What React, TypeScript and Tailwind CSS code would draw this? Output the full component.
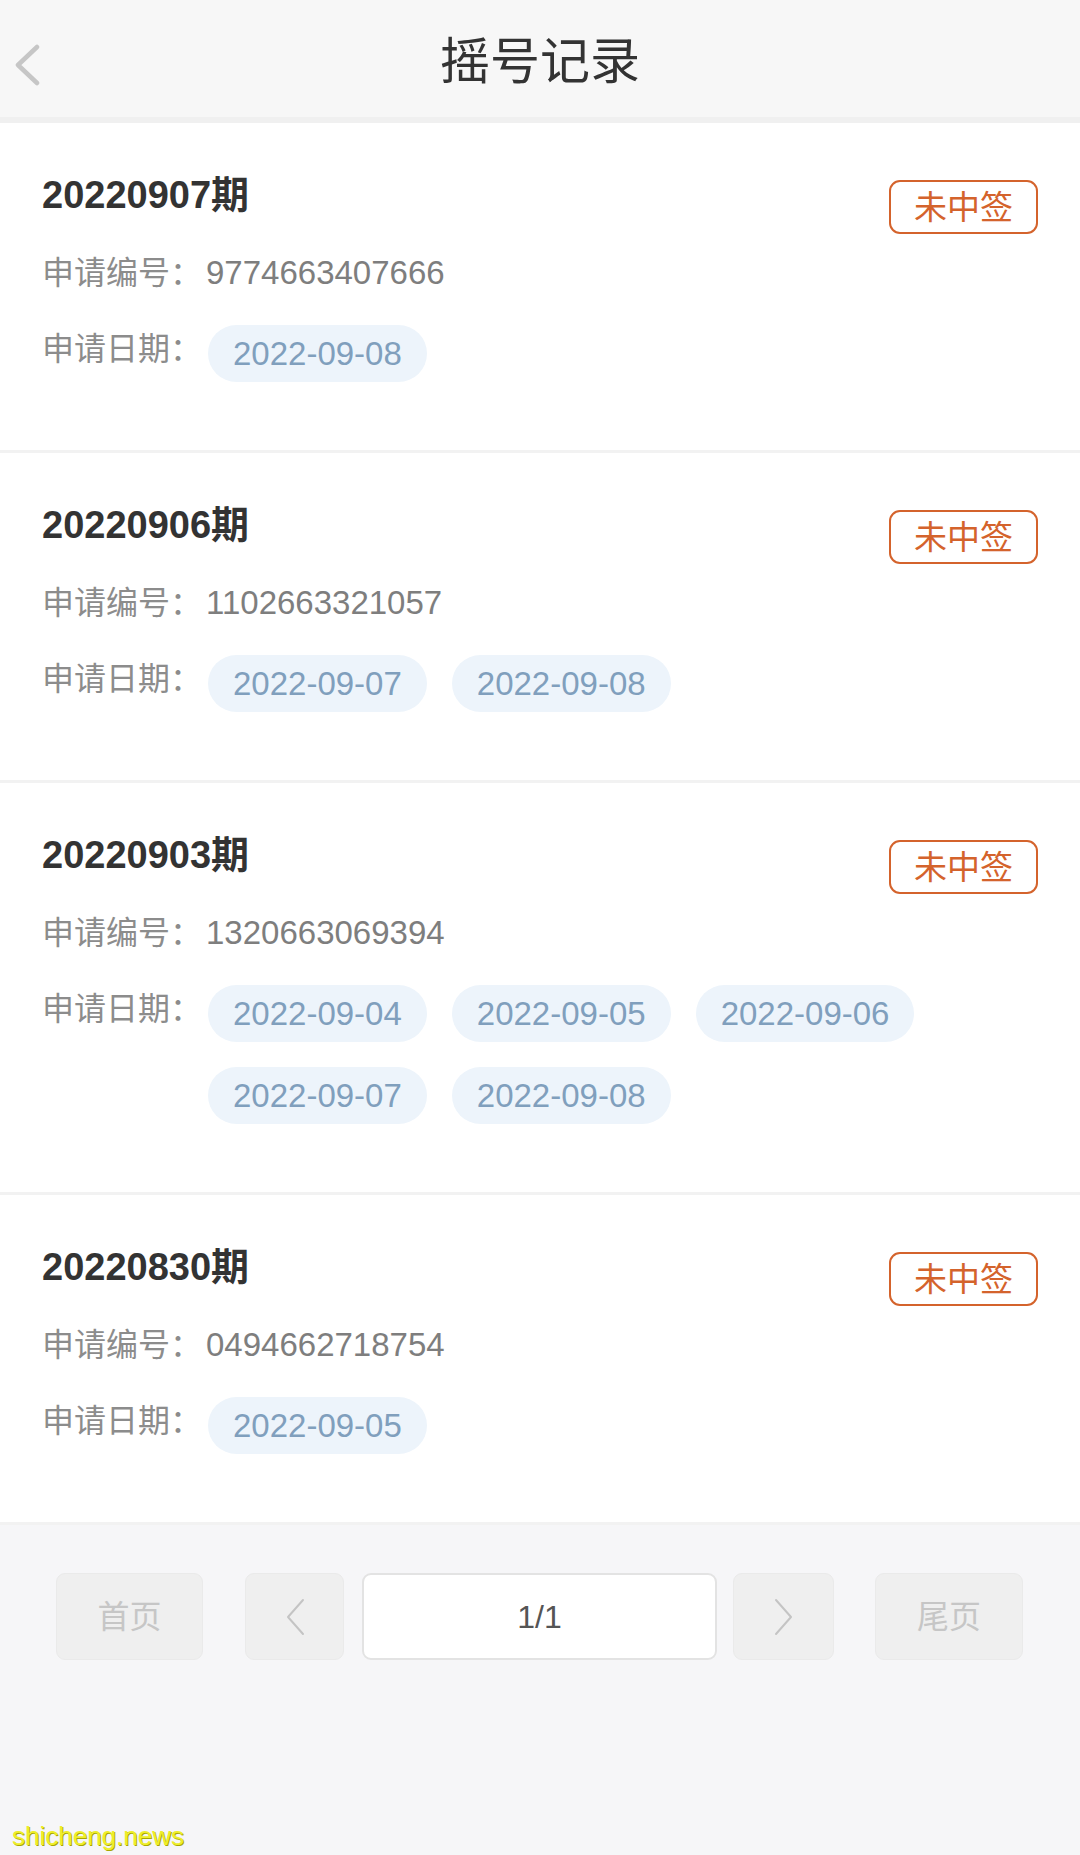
import React from "react";

type Rec = { period: string; code: string; dates: string[] };

const records: Rec[] = [
  { period: "20220907期", code: "9774663407666", dates: ["2022-09-08"] },
  { period: "20220906期", code: "1102663321057", dates: ["2022-09-07", "2022-09-08"] },
  {
    period: "20220903期",
    code: "1320663069394",
    dates: ["2022-09-04", "2022-09-05", "2022-09-06", "2022-09-07", "2022-09-08"],
  },
  { period: "20220830期", code: "0494662718754", dates: ["2022-09-05"] },
];

const FONT = "font-['Liberation_Sans','Noto_Sans_CJK_SC',sans-serif]";

function Card({ r }: { r: Rec }) {
  return (
    <div className="bg-white pl-[42px] pr-[42px] pt-[50px] pb-[68px] border-b-[3px] border-[#f2f2f2]">
      <div className="flex h-[44px] items-start justify-between">
        <div className="text-[38px] leading-[44px] font-bold text-[#333333]">{r.period}</div>
        <div className="mt-[7px] flex h-[54px] w-[149px] items-center justify-center rounded-[11px] border-[2.5px] border-[#d4632c] text-[33px] leading-none text-[#d4632c]">
          未中签
        </div>
      </div>
      <div className="mt-[34px] flex h-[44px] items-center">
        <span className="text-[32px] leading-[44px] text-[#8c8c8c]">申请编号：</span>
        <span className="ml-[4px] text-[33px] leading-[44px] text-[#7e7e7e]">{r.code}</span>
      </div>
      <div className="mt-[30px] flex items-start">
        <span className="mt-[2px] w-[166px] shrink-0 text-[32px] leading-[44px] text-[#8c8c8c]">申请日期：</span>
        <div className="flex flex-wrap gap-x-[25px] gap-y-[25px]">
          {r.dates.map((d) => (
            <div
              key={d}
              className="flex h-[57px] items-center rounded-full bg-[#edf4fb] px-[25px] text-[33px] leading-none text-[#809fbd]"
            >
              {d}
            </div>
          ))}
        </div>
      </div>
    </div>
  );
}

function Chevron({ dir }: { dir: "l" | "r" }) {
  return (
    <svg width="22" height="38" viewBox="0 0 22 38" fill="none">
      <path
        d={dir === "l" ? "M19 2 L4 19 L19 36" : "M3 2 L18 19 L3 36"}
        stroke="#c4c4c4"
        strokeWidth="2"
        strokeLinecap="round"
        strokeLinejoin="round"
      />
    </svg>
  );
}

export default function App() {
  return (
    <div className={`relative min-h-[1855px] w-[1080px] bg-[#f6f6f8] ${FONT}`}>
      <div className="relative flex h-[123px] items-center justify-center border-b-[6px] border-[#f0f0f0] bg-[#f7f7f7] pt-[6px]">
        <div className="absolute left-[13px] top-[44px]">
          <svg width="28" height="42" viewBox="0 0 28 42" fill="none">
            <path
              d="M24 3 L5 21 L24 39"
              stroke="#c6c6c6"
              strokeWidth="4.5"
              strokeLinecap="round"
              strokeLinejoin="round"
            />
          </svg>
        </div>
        <div className="text-[50px] leading-none text-[#333333]">摇号记录</div>
      </div>

      {records.map((r) => (
        <Card key={r.period} r={r} />
      ))}

      <div className="flex items-center pl-[56px] pr-[57px] pt-[48px]">
        <div className="flex h-[87px] w-[147px] items-center justify-center rounded-[9px] border border-[#eaeaea] bg-[#efefef] text-[32px] text-[#c6c6c6]">
          首页
        </div>
        <div className="ml-[42px] flex h-[87px] w-[99px] items-center justify-center rounded-[9px] border border-[#eaeaea] bg-[#efefef]">
          <Chevron dir="l" />
        </div>
        <div className="ml-[18px] flex h-[87px] w-[355px] items-center justify-center rounded-[9px] border-2 border-[#e3e3e3] bg-white text-[32px] text-[#555555]">
          1/1
        </div>
        <div className="ml-[16px] flex h-[87px] w-[101px] items-center justify-center rounded-[9px] border border-[#eaeaea] bg-[#efefef]">
          <Chevron dir="r" />
        </div>
        <div className="ml-[41px] flex h-[87px] w-[148px] items-center justify-center rounded-[9px] border border-[#eaeaea] bg-[#efefef] text-[32px] text-[#c6c6c6]">
          尾页
        </div>
      </div>

      <div className="absolute bottom-[6px] left-[12px] text-[26px] leading-none text-[#eeee2a] [text-shadow:1px_1px_0_#a8a800]">
        shicheng.news
      </div>
    </div>
  );
}
